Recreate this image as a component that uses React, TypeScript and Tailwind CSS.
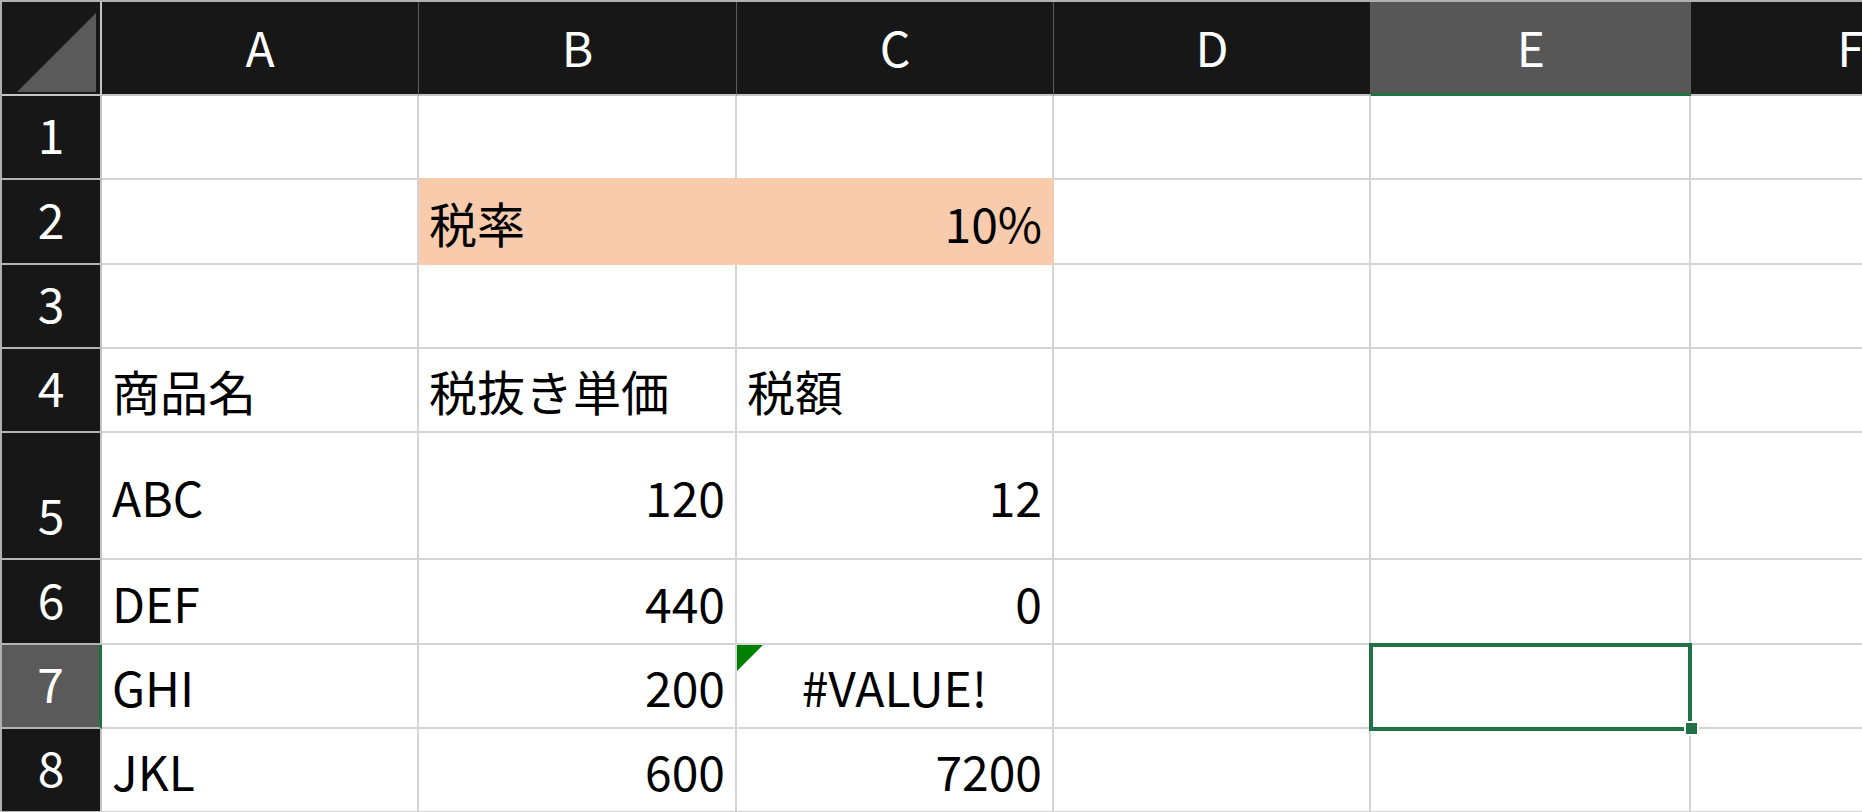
import clsx from "clsx";

type Cell = {
  v?: string;
  align?: "left" | "right" | "center";
  fill?: boolean;
  error?: boolean;
};

const COLS = ["A", "B", "C", "D", "E", "F"];
const SELECTED_COL = 4; // E
const SELECTED_ROW = 7;

const ROWS: { n: number; cells: Cell[] }[] = [
  { n: 1, cells: [] },
  { n: 2, cells: [{}, { v: "税率", fill: true }, { v: "10%", align: "right", fill: true }] },
  { n: 3, cells: [] },
  { n: 4, cells: [{ v: "商品名" }, { v: "税抜き単価" }, { v: "税額" }] },
  { n: 5, cells: [{ v: "ABC" }, { v: "120", align: "right" }, { v: "12", align: "right" }] },
  { n: 6, cells: [{ v: "DEF" }, { v: "440", align: "right" }, { v: "0", align: "right" }] },
  { n: 7, cells: [{ v: "GHI" }, { v: "200", align: "right" }, { v: "#VALUE!", align: "center", error: true }] },
  { n: 8, cells: [{ v: "JKL" }, { v: "600", align: "right" }, { v: "7200", align: "right" }] },
];

function ColHeader({ label, selected }: { label: string; selected: boolean }) {
  return (
    <div
      className={clsx(
        "flex items-center justify-center pb-1 text-white",
        selected
          ? "border-b-[3px] border-[#217346] bg-[#575757]"
          : "border-b-2 border-r border-b-[#c4c4c4] border-r-[#5c5c5c] bg-[#171717]",
      )}
    >
      {label}
    </div>
  );
}

function RowHeader({ n }: { n: number }) {
  const selected = n === SELECTED_ROW;
  return (
    <div
      className={clsx(
        "flex items-end justify-center border-b-2 border-b-[#b4b4b4] pb-[21px] text-white",
        selected
          ? "border-r-[3px] border-r-[#217346] bg-[#5a5a5a]"
          : "border-r-2 border-r-[#c4c4c4] bg-[#171717]",
      )}
    >
      {n}
    </div>
  );
}

function DataCell({ cell, row, col }: { cell: Cell; row: number; col: number }) {
  const fillAbove = row === 1 && (col === 1 || col === 2);
  const isSelected = row === SELECTED_ROW && col === SELECTED_COL;
  return (
    <div
      className={clsx(
        "relative flex items-center border-b-2 border-r-2 px-[10px] text-black",
        cell.fill ? "border-[#f8cbad] bg-[#f8cbad]" : "border-[#d4d4d4] bg-white",
        fillAbove && "border-b-[#f8cbad]",
        cell.align === "right" && "justify-end",
        cell.align === "center" && "justify-center",
        isSelected && "z-10",
      )}
    >
      {cell.error && (
        <span className="absolute left-0 top-0 h-0 w-0 border-r-[26px] border-t-[26px] border-r-transparent border-t-[#008000]" />
      )}
      {cell.v && <span className="whitespace-nowrap">{cell.v}</span>}
      {isSelected && (
        <>
          <span className="absolute -left-[2px] -top-[2px] h-[88px] w-[323px] border-4 border-[#217346]" />
          <span className="absolute left-[313px] top-[76px] h-[15px] w-[15px] border-2 border-white bg-[#217346]" />
        </>
      )}
    </div>
  );
}

export default function App() {
  return (
    <div className="h-[812px] w-[1862px] overflow-hidden bg-white">
      <div className="grid h-[814px] w-max grid-cols-[100px_317px_318px_317px_317px_320px_320px] grid-rows-[94px_84px_85px_84px_84px_127px_85px_84px_84px] border-l-2 border-t-2 border-[#b0b0b0] font-['Noto_Sans_CJK_JP',sans-serif] text-[48px] leading-none">
        {/* corner */}
        <div className="relative border-b-2 border-r-2 border-[#c4c4c4] bg-[#171717]">
          <svg width="98" height="92" className="absolute left-0 top-0">
            <polygon points="15,90 94,90 94,11" fill="#5a5a5a" />
          </svg>
        </div>
        {COLS.map((c, i) => (
          <ColHeader key={c} label={c} selected={i === SELECTED_COL} />
        ))}

        {ROWS.map((r) => (
          <div key={r.n} className="contents">
            <RowHeader n={r.n} />
            {COLS.map((c, i) => (
              <DataCell key={c} cell={r.cells[i] ?? {}} row={r.n} col={i} />
            ))}
          </div>
        ))}
      </div>
    </div>
  );
}
